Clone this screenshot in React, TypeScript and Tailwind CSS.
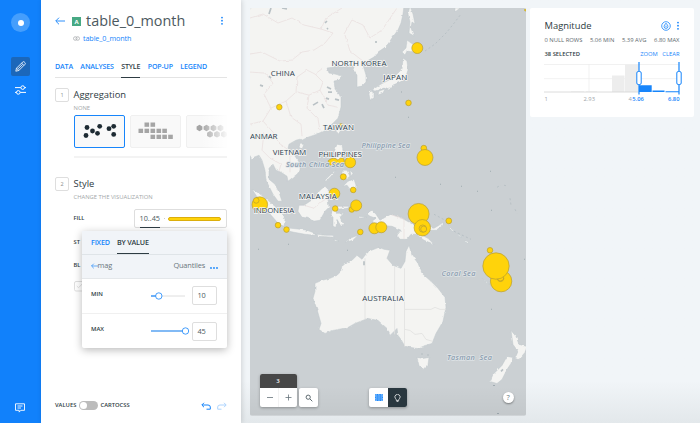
import React from "react";

const land = [
  // Asian mainland with Korea and Indochina
  "M248 6 L404 6 L403 14 L401 23 L398 30 L392 38 L388 44 L384 48 L378 52 L374 57 L367 61 L363 65 L366 75 L366 82 L362 86 L357 87 L357 80 L357 75 L353 70 L354 67 L350 64 L345 67 L340 67 L337 65 L334 67 L327 68 L329 73 L335 74 L343 76 L339 80 L334 81 L335 89 L339 94 L341 98 L341 107 L338 118 L333 123 L325 130 L317 134 L308 137 L302 140 L300 139 L296 140 L289 144 L288 148 L295 156 L300 163 L300 170 L297 174 L288 181 L287 176 L281 172 L276 170 L273 164 L269 168 L269 179 L275 184 L279 192 L282 201 L278 201 L273 194 L270 188 L266 180 L265 170 L262 160 L259 155 L254 157 L252 159 L248 152Z",
  "M300 144 L304 144 L302 149 L299 147Z",
  "M340 125 L342 126 L339 134 L336 131Z",
  // Sakhalin, Hokkaido, Honshu, Kyushu
  "M410 6 L413 14 L415 24 L412 22 L411 28 L414 36 L409 33 L410 22 L408 14Z",
  "M407 40 L411 43 L417 46 L413 52 L407 51 L405 55 L402 52 L406 48Z",
  "M403 58 L407 61 L408 70 L405 79 L400 82 L393 85 L389 90 L384 88 L375 91 L372 90 L381 84 L389 80 L396 75 L402 69Z",
  "M370 90 L374 92 L374 98 L370 100 L369 94Z M379 91 L385 89 L383 93 L378 95Z",
  // Philippines
  "M337 144 L342 145 L343 151 L341 157 L346 163 L342 163 L336 159 L334 152Z",
  "M342 170 L347 170 L350 176 L346 179 L342 176Z M350 170 L353 173 L351 176Z",
  "M354 179 L356 185 L355 190 L350 189 L347 185 L343 186 L348 181Z",
  "M336 170 L331 176 L326 181 L325 180 L334 171Z",
  // Borneo, Sumatra, Java, Sulawesi
  "M299 205 L304 205 L313 199 L320 190 L325 186 L332 193 L328 198 L329 207 L325 211 L320 220 L313 221 L309 218 L302 217 L298 211Z",
  "M252 189 L259 193 L268 200 L276 207 L282 213 L285 219 L284 226 L279 224 L272 216 L265 208 L258 198Z",
  "M284 227 L291 228 L300 229 L307 230 L315 233 L315 235 L305 234 L294 232 L285 230Z",
  "M334 206 L349 206 L348 208 L337 209 L336 213 L344 213 L340 217 L344 225 L341 226 L337 219 L336 227 L333 226 L333 217 L331 215Z",
  "M317 234 L325 235 L333 235 L334 237 L318 236Z M345 242 L350 238 L358 235 L353 240Z M334 239 L339 241 L335 241Z",
  "M356 204 L358 208 L356 211Z M359 216 L367 217 L359 218Z",
  // New Guinea, Solomon Islands
  "M366 213 L372 210 L376 214 L380 220 L387 216 L391 214 L402 218 L411 223 L419 228 L422 235 L428 238 L434 244 L424 240 L416 234 L411 234 L407 239 L400 239 L397 235 L401 230 L392 226 L380 225 L372 221 L376 218 L370 216Z",
  "M428 227 L434 228 L439 225 L443 222 L443 225 L436 230 L429 230Z M449 225 L454 230 L452 231Z M457 233 L462 237 L459 236Z M465 240 L469 242 L467 243Z",
  // Australia, Tasmania
  "M315 283 L322 280 L330 278 L337 275 L342 270 L343 265 L347 262 L352 260 L357 255 L362 259 L365 255 L369 251 L374 249 L379 247 L384 249 L390 250 L387 258 L393 265 L401 268 L405 261 L406 251 L409 245 L412 255 L418 263 L422 273 L431 281 L438 288 L445 297 L446 307 L443 321 L436 333 L432 343 L422 346 L417 348 L405 346 L401 339 L398 335 L397 328 L390 335 L387 328 L378 320 L368 318 L355 323 L348 327 L333 330 L325 333 L319 329 L321 323 L317 309 L313 298 L315 291Z",
  "M417 357 L423 358 L429 357 L428 364 L423 369 L419 365Z",
  // New Zealand, New Caledonia
  "M511 330 L516 336 L519 344 L527 346 L525 352 L519 359 L515 358 L518 351 L513 344Z",
  "M507 356 L513 357 L511 363 L507 369 L502 379 L497 383 L490 381 L493 374 L502 365Z",
  "M482 278 L490 284 L487 283Z M455 8 L460 8 L455 12Z",
];

const borders =
  "M250 54 L262 52 L280 61 L292 60 L302 52 L314 50 L325 43 L333 33 L321 29 L326 18 L342 8 M250 18 L263 14 L278 23 L292 18 L304 25 L321 29 M344 34 L352 20 L363 25 L370 38 L382 30 L397 8 M345 35 L350 51 L363 61 M250 72 L265 73 L273 83 L264 94 L271 108 L263 121 L250 124 M271 108 L286 101 L296 92 L297 77 L307 70 L315 74 L323 68 M297 92 L309 95 L320 90 L323 82 L315 74 M286 101 L291 117 L301 124 L302 136 M309 95 L307 108 L318 119 L320 130 M320 90 L328 105 L338 107 M263 121 L273 132 L279 143 L290 151 L290 171 M264 132 L262 150 L270 158 L281 164 L279 171 M304 205 L314 208 L321 201 L329 198 M390 214 L404 219 L404 239";

type Dot = [number, number, number];
const dots: Dot[] = [
  [417.3, 48, 5.5], [279.3, 107, 2.8], [408.5, 102.8, 2.8], [341, 125.5, 2],
  [350.2, 162.2, 5.4], [343.3, 176.6, 3], [353.2, 189.7, 2.8], [334.4, 193.4, 5.4],
  [335.2, 208.3, 2.8], [351.8, 209.2, 2.8], [356.2, 205.2, 5.5], [259.8, 204.4, 7.8], [256.2, 200.2, 2.8],
  [278, 224.9, 2.8], [286.5, 229.3, 2.8], [360.3, 231.7, 2.8], [374.4, 228, 5.5], [381.3, 227, 5.5],
  [423.8, 148, 2.9], [425, 157.3, 8], [418.6, 213.7, 10.5], [422.3, 227.5, 8.2], [422.7, 228.3, 3.6], [423.7, 228.8, 3],
  [448.8, 220.6, 2.9], [490, 250, 2.8], [501.1, 280.8, 10.7], [500.5, 278, 3.2], [496, 265.7, 13.2],
];

function MapCanvas() {
  return (
    <svg className="absolute inset-0 h-full w-full" viewBox="250 8 276 407" preserveAspectRatio="none">
      <defs>
        <filter id="coast" x="0" y="0" width="100%" height="100%">
          <feTurbulence type="fractalNoise" baseFrequency="0.2" numOctaves="2" seed="4" />
          <feDisplacementMap in="SourceGraphic" scale="2.6" xChannelSelector="R" yChannelSelector="G" />
        </filter>
      </defs>
      <rect x="250" y="8" width="276" height="407" fill="#cbd0d3" />
      <g filter="url(#coast)">
        <path d={land.join(" ")} fill="#f4f4f2" stroke="#bdc5ca" strokeWidth=".45" />
        <path d={borders} fill="none" stroke="#e8dddd" strokeWidth=".7" />
      </g>
      <path d="M365 258V319 M394.6 266V334 M404.5 268V346 M405 309H431L435 307L440 309H446 M405 329L410 330L415 334L422 333L426 339L433 341" fill="none" stroke="#e1e1df" strokeWidth=".8" />
      <path d="M327 21l-2 2 M328 28l-1 1 M269 76l2 2 M260 85l3 1 M376 41v2 M271 8l-2 6 M282 8l5 1 M313 105l5-3 M322 104l2 4 M327 87l4 2 M328 92l4 0 M326 98l3 1 M335 99l4 1 M364 261v4 M501 371l2-2" stroke="#b9c1c5" strokeWidth="1.7" fill="none" />
      <path d="M425 51L435 44L441 38L447 32L455 22L461 14 M434 214l13 7 M454 231l17 8 M497 187l4-2 M504 185l4 1 M510 198l1 7 M515 209l2 4" fill="none" stroke="#b5bec3" strokeWidth=".9" strokeDasharray="2 2.4" />
      <path d="M258 249h1 M288 244h1 M347 250h1 M440 184h1 M461 186h1 M477 191h1 M490 171h1 M408 117h1 M395 177h1 M491 309h1 M524 259h1 M422 353v1 M428 354v1 M493 385h2 M497 413h2 M401 92h1 M491 210h1" stroke="#9faab0" strokeWidth="1" />
      <g fill="#ffd30b" stroke="#b49a33" strokeWidth=".65">
        <path d="M328.3 160.3Q334 156 338 160Q341 156 344 159L344.4 163.3Q339 167.3 336 165Q331 167 328.3 163Z" />
        {dots.map(([x, y, r]) => <circle key={`${x}-${y}`} cx={x} cy={y} r={r} />)}
        <path d="M497.2 278.4Q499 282 502 280.4Q503.8 279 503.8 277.5" fill="none" />
        <circle cx="525.5" cy="10" r="1" />
      </g>
      <g className="font-['Open_Sans',sans-serif] font-semibold italic" fill="#8b9daf" stroke="#dfe4e7" strokeWidth="1.3" style={{ paintOrder: "stroke" }} fontSize="7.3">
        <text x="286" y="166.6" textLength="58">South China Sea</text>
        <text x="361.5" y="147.4" textLength="48.5">Philippine Sea</text>
        <text x="441.5" y="275.8" textLength="34">Coral Sea</text>
        <text x="447" y="360" textLength="45" xmlSpace="preserve">Tasman  Sea</text>
      </g>
      <g className="font-['Open_Sans',sans-serif]" fill="#2c3e50" stroke="#f5f5f3" strokeWidth="1.5" style={{ paintOrder: "stroke" }} fontSize="8">
        <text x="270.8" y="76.3" textLength="24">CHINA</text>
        <text x="331.5" y="65.6" textLength="55">NORTH KOREA</text>
        <text x="383.3" y="80.2" textLength="24">JAPAN</text>
        <text x="323" y="130.1" textLength="31">TAIWAN</text>
        <text x="250" y="138.6" textLength="27.5">ANMAR</text>
        <text x="272.8" y="154.5" textLength="33.5">VIETNAM</text>
        <text x="318.5" y="157.3" textLength="43.5">PHILIPPINES</text>
        <text x="298.8" y="199" textLength="38">MALAYSIA</text>
        <text x="253.8" y="212.5" textLength="40.5">INDONESIA</text>
        <text x="362.2" y="300.3" textLength="41.5">AUSTRALIA</text>
      </g>
    </svg>
  );
}

function Back({ className }: { className: string }) {
  return (
    <svg className={className} viewBox="0 0 10 8" fill="none" stroke="#1785fb" strokeWidth=".9">
      <path d="M10 4H1M4 .7L.7 4L4 7.3" />
    </svg>
  );
}

function Dots() {
  return <svg className="h-2.5 w-1 shrink-0" viewBox="0 0 4 10" fill="#1785fb"><circle cx="2" cy="1.6" r=".9" /><circle cx="2" cy="4.7" r=".9" /><circle cx="2" cy="7.8" r=".9" /></svg>;
}

function Step({ n, title, sub }: { n: string; title: string; sub: string }) {
  return (
    <div className="flex gap-[4.5px]">
      <span className="flex h-[14px] w-[14px] shrink-0 items-center justify-center rounded-[2px] border border-[#dedede] text-[5.5px] text-[#8a8a8a]">{n}</span>
      <div className="whitespace-nowrap">
        <div className="text-[9.4px] leading-[14px] text-[#2e3c43]">{title}</div>
        <div className="mt-[1.5px] text-[5.85px] leading-[8px] mb-[0.5px] text-[#a3a7a9]">{sub}</div>
      </div>
    </div>
  );
}

function SliderRow({ label, value, pos }: { label: string; value: string; pos: number }) {
  return (
    <div className="flex h-[34.5px] items-center pl-[9px] pr-[9px]">
      <span className="-mt-[3px] w-[60px] text-[5.9px] font-semibold text-[#2e3c43]">{label}</span>
      <svg className="h-[8px] w-[40px]" viewBox="0 0 40 8">
        <path d="M0 4H34" stroke="#dedede" />
        <path d={`M0 4H${pos}`} stroke="#1785fb" strokeWidth="1.2" />
        <circle cx={pos} cy="4" r="3.2" fill="#fff" stroke="#1785fb" strokeWidth=".8" />
      </svg>
      <span className="ml-[1px] flex h-[19px] w-[25px] items-center rounded-[2px] border border-[#dedede] pl-[4.5px] text-[7.4px] tracking-[-0.2px] text-[#4c5960]">{value}</span>
    </div>
  );
}

function Sidebar() {
  return (
    <nav className="flex w-[41px] shrink-0 flex-col items-center bg-[#1181fb] pt-[13px] pb-[10px]">
      <span className="flex h-[19px] w-[19px] items-center justify-center rounded-full bg-[#459efc]"><i className="h-[6px] w-[6px] rounded-full bg-white" /></span>
      <span className="mt-[25px] mr-[1px] flex h-[19px] w-[19px] items-center justify-center rounded-[2px] bg-[#1b67ba]">
        <svg className="h-[11px] w-[11px]" viewBox="0 0 11 11" fill="none" stroke="white" strokeWidth=".85"><path d="M.8 10.2L1.5 7.2L7.7 1Q8.5.3 9.3 1L10 1.7Q10.7 2.5 10 3.3L3.8 9.5ZM6.6 2.1L8.9 4.4M1.5 7.2L3.8 9.5M3 7.9L7.5 3.4" /></svg>
      </span>
      <svg className="mt-[9px] mr-[1px] h-[10px] w-[11px]" viewBox="0 0 11 10" fill="none" stroke="white" strokeWidth="1"><path d="M0 2.6H5.8M9.6 2.6H11M0 7.4H1.5M5.2 7.4H11" /><circle cx="7.7" cy="2.6" r="1.8" /><circle cx="3.3" cy="7.4" r="1.8" /></svg>
      <svg className="mt-auto mr-[1px] h-[10px] w-[10px]" viewBox="0 0 10 10" fill="none" stroke="white" strokeWidth=".9"><path d="M.5 .8H9.5V7.3H5.8L4.2 9.1V7.3H.5ZM2.5 3H7.5M2.5 5H6" /></svg>
    </nav>
  );
}

function Popup() {
  return (
    <div className="absolute top-[231px] left-[41px] h-[117px] w-[144.5px] rounded-[2px] bg-white shadow-[0_2px_8px_rgba(0,0,0,0.28)]">
      <div className="flex h-[23.5px] gap-[7px] border-b border-[#dfe4e8] bg-[#f1f4f8] pl-[9px] text-[7.2px] font-semibold leading-[23px] tracking-[-0.2px] text-[#2e3c43]">
        <span className="w-[19px] text-[#1785fb]">FIXED</span>
        <span className="w-[32px] whitespace-nowrap border-b border-[#2e3c43]">BY VALUE</span>
      </div>
      <div className="flex h-[24px] items-center border-b border-[#e4e7ea] bg-[#f1f4f8] pr-[9px] pl-[8.5px] text-[7.4px] tracking-[-0.15px] text-[#6b767c]">
        <Back className="h-[6px] w-[7px]" /><span>mag</span>
        <span className="ml-auto">Quantiles</span>
        <svg className="mt-[4px] ml-[4.5px] h-[2px] w-[8px]" viewBox="0 0 8 2" fill="#1785fb"><circle cx="1" cy="1" r=".9" /><circle cx="4" cy="1" r=".9" /><circle cx="7" cy="1" r=".9" /></svg>
      </div>
      <SliderRow label="MIN" value="10" pos={7.8} />
      <div className="border-t border-[#f0f0f0]"><SliderRow label="MAX" value="45" pos={34.5} /></div>
    </div>
  );
}

function EditorPanel() {
  return (
    <section className="relative flex w-[200px] shrink-0 flex-col bg-white px-[14px] shadow-[1px_0_5px_rgba(0,0,0,0.14)]">
      <header className="mt-[10px] flex h-[22px] items-center">
        <Back className="h-[8px] w-[10px]" />
        <span className="ml-[7px] mt-[1px] flex h-[9px] w-[9px] items-center justify-center bg-[#47a984] text-[6px] font-bold leading-none text-white">A</span>
        <h1 className="ml-[5px] w-[101px] whitespace-nowrap text-[14.4px] leading-[22px] text-[#4c5960]">table_0_month</h1>
        <span className="ml-auto mr-[3px] -mt-[1px] flex"><Dots /></span>
      </header>
      <div className="ml-[17.5px] flex h-[12px] items-center gap-[3.5px] text-[7.2px] tracking-[-0.1px] text-[#1785fb]">
        <svg className="h-[5px] w-[7px]" viewBox="0 0 7 5" fill="none" stroke="#a5a8aa" strokeWidth=".7"><circle cx="2.3" cy="2.5" r="1.8" /><circle cx="4.7" cy="2.5" r="1.8" /></svg>
        table_0_month
      </div>
      <div className="mt-[14px] flex h-[20px] w-[172px] justify-between whitespace-nowrap border-b border-[#e4e4e4] pr-[20px] text-[7.1px] font-semibold leading-[16px] tracking-[-0.17px] text-[#1785fb]">
        <span>DATA</span><span>ANALYSES</span><span className="h-[20px] border-b border-[#2e3c43] text-[#2e3c43]">STYLE</span><span>POP-UP</span><span>LEGEND</span>
      </div>
      <div className="mt-[10px]"><Step n="1" title="Aggregation" sub="NONE" /></div>
      <div className="mt-[3px] ml-[18.5px] flex h-[42.5px] w-[153px] gap-[5px] overflow-hidden border-b-2 border-[#f3f3f3]">
        <div className="h-[33px] w-[51px] shrink-0 rounded-[2px] border border-[#1785fb] bg-[#f9f9f9]">
          <svg className="h-full w-full" viewBox="1 1 49 31" fill="#1e2b33"><circle cx="13" cy="12.5" r="2.4" /><circle cx="12" cy="20.5" r="2.4" /><circle cx="18.5" cy="16" r="2.4" /><circle cx="23.5" cy="18.3" r="2.4" /><circle cx="25.7" cy="11.3" r="2.4" /><circle cx="35" cy="13.7" r="2.4" /><circle cx="39.7" cy="11.3" r="2.4" /><circle cx="39.7" cy="19.4" r="2.4" /></svg>
        </div>
        <div className="h-[33px] w-[51px] shrink-0 rounded-[2px] border border-[#f0f0f0] bg-[#f9f9f9]">
          <svg className="h-full w-full" viewBox="1 1 49 31" fill="#a5a5a5">
            {[[14.5, 7.5], [20.5, 7.5], [8.5, 13.7], [14.5, 13.7], [20.5, 13.7], [26.5, 13.7], [32.3, 13.7], [20.5, 19.7], [26.5, 19.7], [32.3, 19.7], [38.2, 19.7]].map(([x, y]) => <rect key={`${x}-${y}`} x={x} y={y} width="4.6" height="4.3" />)}
          </svg>
        </div>
        <div className="relative h-[33px] w-[51px] shrink-0 rounded-[2px] border border-[#f0f0f0] bg-[#f9f9f9]">
          <svg className="h-full w-full" viewBox="1 1 49 31" fill="#a5a5a5">
            {[[13.5, 13], [20.5, 13], [27.5, 13], [34.5, 13], [24, 19.3], [31, 19.3], [38, 19.3]].map(([x, y]) => <path key={`${x}-${y}`} transform={`translate(${x} ${y})`} d="M0-3.2L2.9-1.6V1.6L0 3.2L-2.9 1.6V-1.6Z" />)}
          </svg>
          <div className="absolute inset-y-[-1px] left-[14px] w-[28px] bg-linear-to-r from-white/0 to-white" />
        </div>
      </div>
      <div className="mt-[19.5px]"><Step n="2" title="Style" sub="CHANGE THE VISUALIZATION" /></div>
      <div className="ml-[18.5px] flex flex-col text-[5.7px] font-semibold text-[#2e3c43]">
        <div className="mt-[8px] flex h-[19px] w-[153px] items-center justify-between">FILL
          <span className="flex h-[19px] w-[93px] items-center rounded-[2px] border border-[#dedede] pr-[5px] pl-[5px]">
            <span className="h-[18px] w-[20px] whitespace-nowrap border-b border-[#2e3c43] text-[7.3px] font-normal leading-[17px] text-[#4c5960]">10..45</span>
            <i className="ml-[4px] h-px w-px bg-[#cccccc]" /><i className="ml-auto h-[4px] w-[53px] rounded-full border-[0.5px] border-[#dcae0c] bg-[#ffd30b]" />
          </span>
        </div>
        <span className="mt-[10px] h-[8px] leading-[8px]">ST</span><span className="mt-[15px] h-[8px] leading-[8px]">BL</span>
        <svg className="mt-[12px] h-[11px] w-[11px]" viewBox="0 0 11 11" fill="none" stroke="#d7d7d7" strokeWidth=".8"><rect x=".5" y=".5" width="9.5" height="9.5" rx="1.5" /><path d="M2.8 5L4.5 6.7L8.2 3" /></svg>
      </div>
      <Popup />
      <footer className="mt-auto mb-[11.5px] flex h-[12px] items-center gap-[3px] text-[5.8px] font-semibold text-[#2e3c43]">
        <span className="w-[21px]">VALUES</span><span className="flex h-[9px] w-[18.5px] rounded-full bg-[#bcbcbc] p-px"><i className="h-[7px] w-[7px] rounded-full bg-white" /></span><span>CARTOCSS</span>
        <svg className="ml-auto h-[8px] w-[10px]" viewBox="0 0 10 8" fill="none" stroke="#1785fb"><path d="M3 .8L.8 3L3 5.2M1 3H7Q9.3 3 9.3 5V7.2H5.5" /></svg>
        <svg className="ml-[3px] h-[8px] w-[10px] -scale-x-100 opacity-35" viewBox="0 0 10 8" fill="none" stroke="#1785fb"><path d="M3 .8L.8 3L3 5.2M1 3H7Q9.3 3 9.3 5V7.2H5.5" /></svg>
      </footer>
    </section>
  );
}

function MapControls() {
  return (
    <div className="absolute inset-x-0 bottom-[8.5px] flex items-end pl-[9.5px] pr-[12.5px]">
      <div className="w-[37px] overflow-hidden rounded-[2px] bg-white shadow-[0_1px_3px_rgba(0,0,0,0.3)]">
        <div className="h-[14px] bg-[#474747] text-center text-[6px] font-semibold leading-[15px] text-white">3</div>
        <svg className="block h-[19px] w-[37px]" viewBox="0 0 37 19" fill="none" stroke="#66727a" strokeWidth=".8"><path d="M7 9.5H13M25.5 9.5H31.5M28.5 6.5V12.5" /><path d="M18.5 0V19" stroke="#f0f0f0" /></svg>
      </div>
      <div className="ml-[2.5px] flex h-[19px] w-[19px] items-center justify-center rounded-[2px] bg-white shadow-[0_1px_3px_rgba(0,0,0,0.3)]"><svg className="h-[8px] w-[8px]" viewBox="0 0 8 8" fill="none" stroke="#5d696f" strokeWidth="1"><circle cx="3.2" cy="3.2" r="2.1" /><path d="M4.8 4.8L7.3 7.3" /></svg></div>
      <div className="ml-[51px] flex h-[19px] w-[37.5px] overflow-hidden rounded-[2px] bg-white shadow-[0_1px_3px_rgba(0,0,0,0.3)]">
        <span className="flex w-[19px] items-center justify-center"><svg className="h-[7px] w-[8px]" viewBox="0 0 8 7"><path d="M.5.5H7.5V6.5H.5Z" fill="#5aa8fb" stroke="#1785fb" strokeDasharray="1 .6" /><path d="M2.7 0V7M5.3 0V7" stroke="#1785fb" strokeWidth=".6" /></svg></span>
        <span className="flex w-[18.5px] items-center justify-center bg-[#29373f]"><svg className="h-[8px] w-[7px]" viewBox="0 0 7 8" fill="none" stroke="white" strokeWidth=".75"><path d="M2.4 6.6Q2.5 5.6 1.5 4.6A2.6 2.6 0 1 1 5.5 4.6Q4.5 5.6 4.6 6.6ZM2.6 7.6H4.4" /></svg></span>
      </div>
      <div className="mb-[4px] ml-auto flex h-[11px] w-[11px] items-center justify-center rounded-full bg-white text-[7.5px] text-[#68747a] shadow-[0_1px_2px_rgba(0,0,0,0.4)]">?</div>
    </div>
  );
}

function Widget() {
  return (
    <aside className="mt-[8px] ml-[4px] flex h-[109px] w-[163.5px] shrink-0 flex-col rounded-[2px] bg-white pl-[14.5px] pr-[14px] pt-[11px]">
      <div className="flex h-[14px] items-center text-[9.4px] text-[#2e3c43]">Magnitude
        <svg className="mr-[5px] ml-auto h-[10px] w-[10px]" viewBox="0 0 10 10" fill="none" stroke="#1785fb" strokeWidth=".8"><circle cx="5" cy="5" r="4.3" /><path d="M5 2.2Q7.1 4.5 6.9 5.5A1.9 1.9 0 0 1 3.1 5.5Q3 4.4 5 2.2Z" /><path d="M5 4.6V6.2" /></svg><Dots />
      </div>
      <div className="mt-[2.5px] flex h-[8px] items-center justify-between whitespace-nowrap text-[5.85px] leading-[8px] text-[#60696e]"><span>0 NULL ROWS</span><span>5.06 MIN</span><span>5.39 AVG</span><span>6.80 MAX</span></div>
      <div className="mt-[6px] flex h-[8px] items-center text-[5.8px] leading-[8px] text-[#1785fb]"><span className="font-semibold text-[#2e3c43]">38 SELECTED</span><span className="ml-auto">ZOOM</span><span className="ml-[4.5px]">CLEAR</span></div>
      <svg className="mt-[3px] -ml-[0.7px] h-[34px] w-[138px] overflow-visible" viewBox="0 0 138 34" fill="none">
        <path d="M0 3.5H135M0 17.7H135M45 3V30.5M94.5 3V30.5" stroke="#eeeeee" strokeWidth=".8" />
        <path d="M68 14.5H80.5V31H68ZM81 3.5H94V31H81ZM27 30.5H40V31H27ZM42 30.5H53V31H42Z" fill="#ededed" />
        <path d="M0 31H94.5" stroke="#d3d3d3" strokeWidth=".8" />
        <path d="M95 24.3H107.7V31H95ZM108.5 29.5H120.5V31H108.5ZM121.5 30.2H135V31.2H121.5Z" fill="#1785fb" />
        <path d="M95 1V33.5M135 1V33.5" stroke="#1785fb" strokeWidth="1.2" />
        <rect x="92.8" y="10.5" width="4.4" height="13" rx="1.5" fill="white" stroke="#1785fb" /><rect x="132.8" y="10.5" width="4.4" height="13" rx="1.5" fill="white" stroke="#1785fb" />
      </svg>
      <div className="flex h-[9px] text-[5.8px] leading-[9px] text-[#a0a5a8]"><span className="w-[39px]">1</span><span className="w-[45px]">2.93</span><span>4</span><span className="ml-[0.5px] font-semibold text-[#1785fb]">5.06</span><span className="ml-auto font-semibold text-[#1785fb]">6.80</span></div>
    </aside>
  );
}

export default function App() {
  return (
    <div className="flex h-[423px] w-[700px] overflow-hidden bg-[#f1f5f8] bg-linear-to-b from-[#f1f5f8] from-90% to-[#e3e8eb] font-['Open_Sans',sans-serif]">
      <Sidebar />
      <EditorPanel />
      <main className="relative mt-[8px] ml-[9px] h-[407.5px] w-[276px] shrink-0 overflow-hidden rounded-[2px]"><MapCanvas /><div className="absolute inset-x-0 bottom-0 h-[30px] bg-linear-to-b from-black/0 to-black/4" /><MapControls /></main>
      <Widget />
    </div>
  );
}
